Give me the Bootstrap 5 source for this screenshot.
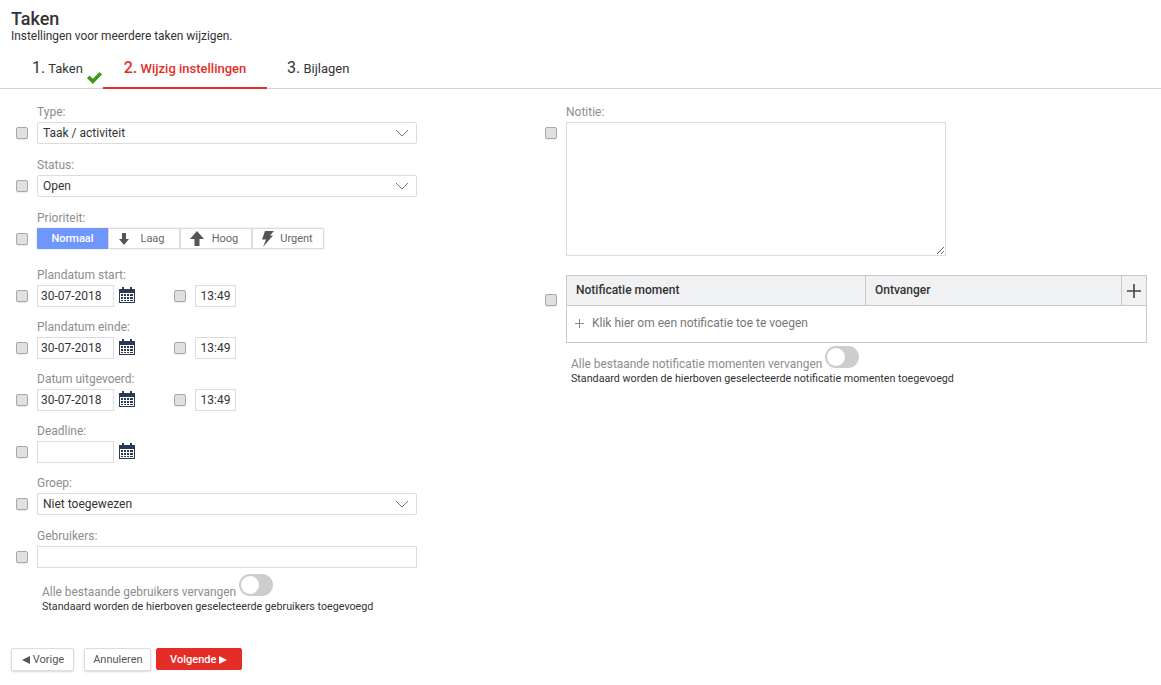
<!DOCTYPE html>
<html lang="nl">
<head>
<meta charset="utf-8">
<title>Taken</title>
<link href="https://cdn.jsdelivr.net/npm/bootstrap@5.3.0/dist/css/bootstrap.min.css" rel="stylesheet">
<style>
html,body{height:100%}
body{font-family:Roboto,"Liberation Sans",sans-serif;font-size:12px;color:#333;background:#fff;overflow:hidden}
.page-head{padding:9px 11px 0}
.page-head h1{font-size:18px;line-height:20px;font-weight:500;margin:0;color:#333}
.page-head p{font-size:11.9px;line-height:15px;margin:0;color:#333}
.wizard{border-bottom:1px solid #d4d4d4;height:38px;padding-left:32px;margin-top:7px;flex-wrap:nowrap}
.wizard .nav-link{padding:0;color:#333;font-size:13px;height:38px;line-height:22px;padding-top:6px;position:relative;border-radius:0}
.wizard .nav-link b{font-size:16px;font-weight:400}
.wizard .step1{width:71px}
.wizard .step2{width:164px;text-align:center;color:#e52d27;font-weight:500;border-bottom:2px solid #e52d27}
.wizard .step2 b{font-weight:500}
.wizard .step3{margin-left:20px}
.check-mark{position:absolute;left:54px;top:20px}
.form-area{padding:15px 14px 0 16px;gap:0}
.left-col{width:401px;flex:none}
.right-col{margin-left:128px;flex:1;min-width:0}
.fld{display:grid;grid-template-columns:21px 1fr;margin-bottom:13px}
.fld label{grid-column:2;color:#8d8d8d;font-size:12px;line-height:16px;height:18px;margin:0}
.fld .ctl{grid-column:2;min-width:0}
.fld>.form-check-input{grid-column:1;align-self:center}
.form-check-input.tick{width:12px;height:12px;margin:0;background:#e0e0e0;border:1px solid #a8a8a8;border-radius:2px;flex:none;box-shadow:0 1px 1px rgba(0,0,0,.08)}
.form-select.pick{height:22px;padding:0 24px 0 5px;font-size:12px;line-height:20px;color:#333;border:1px solid #dcdcdc;border-radius:2px;background-position:right 7px center;background-size:14px 8px;background-image:url("data:image/svg+xml,%3csvg xmlns='http://www.w3.org/2000/svg' viewBox='0 0 14 8'%3e%3cpath fill='none' stroke='%23777' d='M1 1l6 6 6-6'/%3e%3c/svg%3e")}
.form-control.box{height:22px;padding:0 3px;font-size:12px;color:#333;border:1px solid #dcdcdc;border-radius:0;line-height:20px}
.form-control.box.date-in{width:77px;flex:none}
.form-control.box.time-in{width:41px;flex:none;text-align:center;padding:0}
.cal{margin-left:5px;margin-bottom:2px;flex:none;display:block}
.form-check-input.tick.time-tick{margin-left:39px;margin-right:9px}
.prio{border-radius:2px;box-shadow:0 0 2px rgba(0,0,0,.18)}
.prio .btn{--bs-btn-padding-x:0;--bs-btn-padding-y:0;height:21px;font-size:11px;line-height:19px;color:#666;border:1px solid #dcdcdc;background:#fff;border-radius:0;width:72px;flex:none;display:flex;align-items:center;justify-content:center;margin-left:0}
.prio .btn.on{background:#6f96fb;border-color:#6f96fb;color:#fff;font-weight:500;width:71px}
.prio .btn.n1{gap:10px;padding-right:5px}
.prio .btn.n2{gap:8px;padding-right:4px}
.prio .btn.n3{gap:6px;padding-right:2px}
.fld.row-date{margin-bottom:12px}
.fld.gap-big{margin-bottom:18px}
.switch-row{color:#8d8d8d;font-size:11.9px;line-height:16px;display:flex;align-items:flex-start}
.switch-row span{padding-top:10px}
.tgl{width:34px;height:22px;border-radius:11px;background:#cdcdcd;position:relative;margin-left:3px;flex:none}
.tgl::after{content:"";position:absolute;left:2px;top:2px;width:18px;height:18px;border-radius:50%;background:#fff}
.hint{font-size:10.72px;line-height:13px;color:#333;margin-top:0}
.users-switch{padding-left:26px;margin-top:-7px}
.foot{position:absolute;left:11px;top:648px;display:flex}
.foot .btn{--bs-btn-padding-y:0;height:23px;font-size:11px;line-height:21px;border-radius:2px;padding:0 7.500px 0 8px}
.btn.plain{background:#fff;border:1px solid #dcdcdc;color:#555;box-shadow:0 1px 2px rgba(0,0,0,.15)}
.foot .btn.go{background:#e52d27;border:1px solid #e52d27;color:#fff;font-weight:500;padding:0 13.500px 0 13px;margin-left:5px;height:22px}
.foot .btn.plain.back{margin-right:10px;padding:0 9px 0 10px}
.foot svg{vertical-align:-1px}
textarea.box.note{width:380px;height:134px;resize:both;border-radius:0}
.fld.note-fld{margin-bottom:19px;grid-template-columns:21px 1fr}
.note-fld>.form-check-input{align-self:start;margin-top:5px}
.table-fld>.form-check-input.tick{margin-bottom:18px}
.notif{border:1px solid #c9c9c9;--bs-table-bg:transparent;margin:0;width:100%;table-layout:fixed;border-collapse:collapse}
.notif th{background:#f0f1f3;font-size:12px;font-weight:500;line-height:20px;height:30px;padding:3px 9px 5px;color:#333;border:1px solid #c9c9c9;border-top:0;vertical-align:middle}
.notif td{padding:0 8px 2px;height:37px;color:#777;font-size:12px;border:0;vertical-align:middle}
.notif .plus-h{width:25px;padding:0;text-align:center}
.plus-ico{display:block;margin:auto}
.notif-switch{padding-left:26px;margin-top:3px}
</style>
</head>
<body>
<div class="page-head">
  <h1>Taken</h1>
  <p>Instellingen voor meerdere taken wijzigen.</p>
</div>
<nav class="nav wizard">
  <a class="nav-link step1" href="#"><b>1.</b> Taken
    <svg class="check-mark" width="17" height="14" viewBox="0 0 17 14"><path fill="#3c9a16" d="M1 7l2.500-2.500 3.300 3.300L13.600 1 16 3.400 6.800 13z"/></svg>
  </a>
  <a class="nav-link step2" href="#"><b>2.</b> Wijzig instellingen</a>
  <a class="nav-link step3" href="#"><b>3.</b> Bijlagen</a>
</nav>

<div class="d-flex form-area">
  <div class="left-col">
    <div class="fld">
      <label>Type:</label>
      <input type="checkbox" class="form-check-input tick">
      <div class="ctl"><select class="form-select pick"><option>Taak / activiteit</option></select></div>
    </div>
    <div class="fld">
      <label>Status:</label>
      <input type="checkbox" class="form-check-input tick">
      <div class="ctl"><select class="form-select pick"><option>Open</option></select></div>
    </div>
    <div class="fld gap-big">
      <label>Prioriteit:</label>
      <input type="checkbox" class="form-check-input tick">
      <div class="ctl">
        <div class="d-inline-flex prio">
          <button type="button" class="btn on">Normaal</button>
          <button type="button" class="btn n1"><svg width="12" height="14" viewBox="0 0 12 14"><path fill="#555" d="M4 1h4v6h3l-5 6-5-6h3z"/></svg>Laag</button>
          <button type="button" class="btn n2"><svg width="14" height="15" viewBox="0 0 14 15"><path fill="#555" d="M7 0l7 8H9.500v7h-5V8H0z"/></svg>Hoog</button>
          <button type="button" class="btn n3"><svg width="13" height="16" viewBox="0 0 13 16"><path fill="#555" d="M4 0h9L9 4.500h3L2 16l3-7.500H1z"/></svg>Urgent</button>
        </div>
      </div>
    </div>

    <div class="fld row-date">
      <label>Plandatum start:</label>
      <input type="checkbox" class="form-check-input tick">
      <div class="ctl d-flex align-items-center">
        <input class="form-control box date-in" value="30-07-2018">
        <svg class="cal" width="16" height="16" viewBox="0 0 16 16"><use href="#calico"/></svg>
        <input type="checkbox" class="form-check-input tick time-tick">
        <input class="form-control box time-in" value="13:49">
      </div>
    </div>
    <div class="fld row-date">
      <label>Plandatum einde:</label>
      <input type="checkbox" class="form-check-input tick">
      <div class="ctl d-flex align-items-center">
        <input class="form-control box date-in" value="30-07-2018">
        <svg class="cal" width="16" height="16" viewBox="0 0 16 16"><use href="#calico"/></svg>
        <input type="checkbox" class="form-check-input tick time-tick">
        <input class="form-control box time-in" value="13:49">
      </div>
    </div>
    <div class="fld row-date">
      <label>Datum uitgevoerd:</label>
      <input type="checkbox" class="form-check-input tick">
      <div class="ctl d-flex align-items-center">
        <input class="form-control box date-in" value="30-07-2018">
        <svg class="cal" width="16" height="16" viewBox="0 0 16 16"><use href="#calico"/></svg>
        <input type="checkbox" class="form-check-input tick time-tick">
        <input class="form-control box time-in" value="13:49">
      </div>
    </div>
    <div class="fld row-date">
      <label>Deadline:</label>
      <input type="checkbox" class="form-check-input tick">
      <div class="ctl d-flex align-items-center">
        <input class="form-control box date-in" value="">
        <svg class="cal" width="16" height="16" viewBox="0 0 16 16"><use href="#calico"/></svg>
      </div>
    </div>
    <div class="fld">
      <label>Groep:</label>
      <input type="checkbox" class="form-check-input tick">
      <div class="ctl"><select class="form-select pick"><option>Niet toegewezen</option></select></div>
    </div>
    <div class="fld">
      <label>Gebruikers:</label>
      <input type="checkbox" class="form-check-input tick">
      <div class="ctl"><input class="form-control box"></div>
    </div>
    <div class="users-switch">
      <div class="switch-row"><span>Alle bestaande gebruikers vervangen</span><div class="tgl"></div></div>
      <div class="hint">Standaard worden de hierboven geselecteerde gebruikers toegevoegd</div>
    </div>
  </div>

  <div class="right-col">
    <div class="fld note-fld">
      <label>Notitie:</label>
      <input type="checkbox" class="form-check-input tick">
      <div class="ctl"><textarea class="form-control box note"></textarea></div>
    </div>
    <div class="fld table-fld mb-0">
      <input type="checkbox" class="form-check-input tick">
      <div class="ctl">
        <table class="table notif">
          <thead>
            <tr><th>Notificatie moment</th><th style="width:256px">Ontvanger</th><th class="plus-h"><svg class="plus-ico" width="14" height="14" viewBox="0 0 14 14"><path fill="none" stroke="#444" stroke-width="1.600" d="M7 0v14M0 7h14"/></svg></th></tr>
          </thead>
          <tbody>
            <tr><td colspan="3"><svg width="9" height="9" viewBox="0 0 9 9" class="me-2"><path fill="none" stroke="#888" d="M4.500 0v9M0 4.500h9"/></svg>Klik hier om een notificatie toe te voegen</td></tr>
          </tbody>
        </table>
      </div>
    </div>
    <div class="notif-switch">
      <div class="switch-row"><span>Alle bestaande notificatie momenten vervangen</span><div class="tgl"></div></div>
      <div class="hint">Standaard worden de hierboven geselecteerde notificatie momenten toegevoegd</div>
    </div>
  </div>
</div>

<div class="foot">
  <button type="button" class="btn plain back"><svg width="8" height="8" viewBox="0 0 8 8"><path fill="#555" d="M8 0v8L0 4z"/></svg> Vorige</button>
  <button type="button" class="btn plain">Annuleren</button>
  <button type="button" class="btn go">Volgende <svg width="8" height="8" viewBox="0 0 8 8"><path fill="#fff" d="M0 0v8l8-4z"/></svg></button>
</div>

<svg width="0" height="0" class="d-none">
  <symbol id="calico" viewBox="0 0 16 16">
    <path fill="#2a3a55" d="M0 2h3V0h2v2h6V0h2v2h3v14H0zM1 6v9h14V6z"/>
    <path fill="#2a3a55" d="M2 7h2v2H2zM5 7h2v2H5zM8 7h2v2H8zM11 7h3v2h-3zM2 10h2v2H2zM5 10h2v2H5zM8 10h2v2H8zM11 10h3v2h-3zM2 13h2v1H2zM5 13h2v1H5zM8 13h2v1H8zM11 13h3v1h-3z"/>
  </symbol>
</svg>
<script src="https://cdn.jsdelivr.net/npm/bootstrap@5.3.0/dist/js/bootstrap.bundle.min.js"></script>
</body>
</html>
